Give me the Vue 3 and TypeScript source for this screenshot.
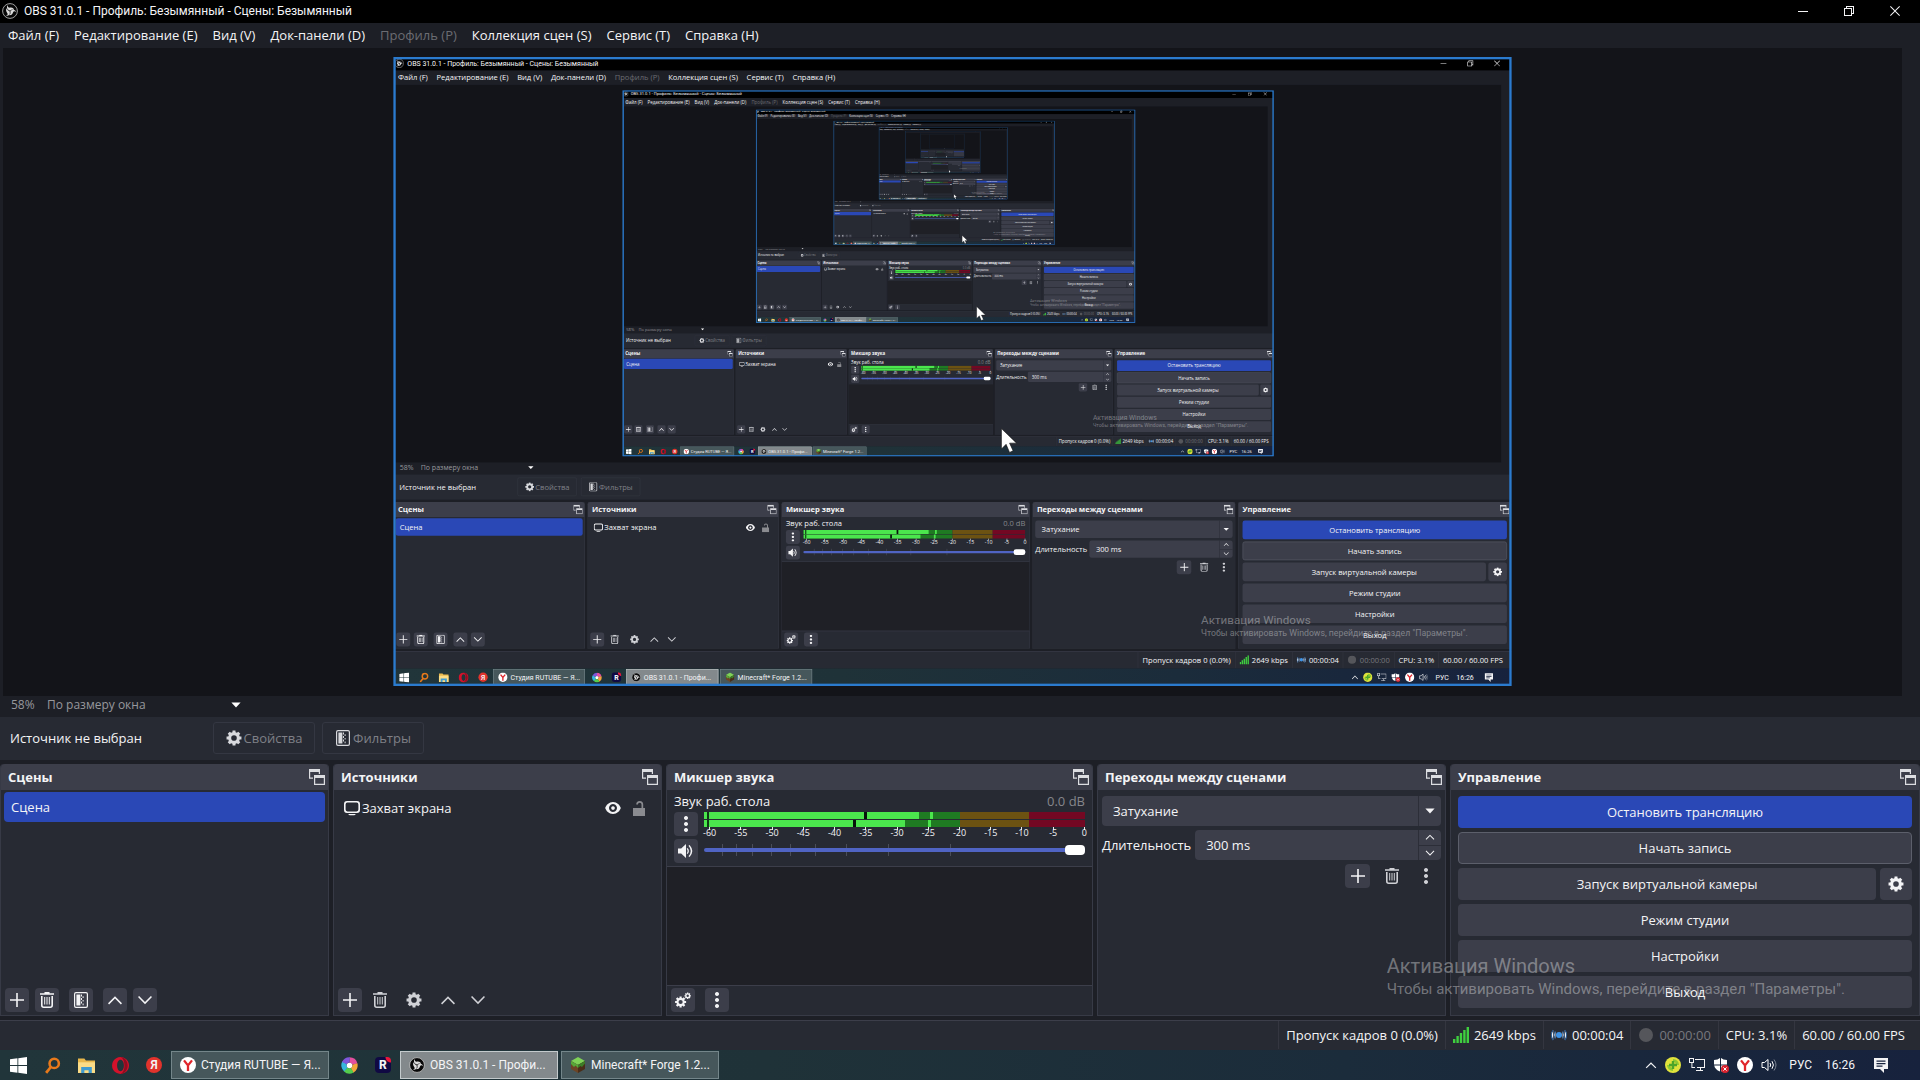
<script setup lang="ts">
import { computed, h, ref } from 'vue'

defineOptions({ name: 'StudioWindow' })

const props = withDefaults(defineProps<{ depth?: number }>(), { depth: 0 })
const maxDepth = 7
const captured = computed(() => props.depth > 0)
const fieldId = (name: string) => `${name}-${props.depth}`

function gear(cx: number, cy: number, outer: number, root: number, hole: number): string {
  const teeth = 8
  const points: string[] = []
  for (let i = 0; i < teeth; i++) {
    const a = (i / teeth) * Math.PI * 2
    const steps: [number, number][] = [[-0.27, root], [-0.19, outer], [0.19, outer], [0.27, root]]
    for (const [d, r] of steps) {
      points.push(`${(cx + r * Math.sin(a + d)).toFixed(2)} ${(cy - r * Math.cos(a + d)).toFixed(2)}`)
    }
  }
  return (
    `M${points.join('L')}Z` +
    `M${cx - hole} ${cy}a${hole} ${hole} 0 1 0 ${hole * 2} 0a${hole} ${hole} 0 1 0 ${-hole * 2} 0Z`
  )
}

const glyphs: Record<string, string> = {
  plus: 'M7.2 1h1.6v6.2H15v1.6H8.8V15H7.2V8.8H1V7.2h6.2Z',
  trash:
    'M5.5 0h5v1.2H15v1.6H1V1.2h4.5ZM2 4h1.6v9.2q0 1.2 1.2 1.2h6.4q1.2 0 1.2-1.2V4H14v9.3q0 2.7-2.7 2.7H4.7Q2 16 2 13.3ZM5.2 5h1v7.6h-1ZM7.5 5h1v7.6h-1ZM9.8 5h1v7.6h-1Z',
  filter:
    'M3 0h10q2 0 2 2v12q0 2-2 2H3q-2 0-2-2V2q0-2 2-2ZM3 1.2q-.8 0-.8.8v12q0 .8.8.8h10q.8 0 .8-.8V2q0-.8-.8-.8ZM3.4 2.5h4v11h-4ZM8 2.5h1v2H8ZM8 6h1v2H8ZM8 9.5h1v2H8ZM9.6 4.3h1v1.6h-1ZM9.6 8h1v1.6h-1ZM9.6 11.6h1v1.6h-1Z',
  up: 'M8 4.2l7 7.1-1.1 1.1L8 6.5l-5.9 5.9L1 11.3Z',
  down: 'M8 12.2L1 5.1 2.1 4 8 9.9 13.9 4 15 5.1Z',
  gear: gear(8, 8, 7.6, 5.9, 2.8),
  gears: gear(5.6, 10, 5.6, 4.2, 2.1) + gear(12.7, 3.8, 3.3, 2.5, 1.2),
  dots: 'M8 0a2 2 0 1 0 .01 0ZM8 6a2 2 0 1 0 .01 0ZM8 12a2 2 0 1 0 .01 0Z',
  arrow: 'M3.4 5.6h9.2L8 10.6Z',
  popout:
    'M0 0h11v5h-1.2V3H1.2v5.5H4v1.2H0ZM5 6h11v10H5ZM6.2 9v5.8h8.6V9Z',
  speaker:
    'M0 5.4h3.2L8 1v14l-4.8-4.4H0ZM9.6 4.9q2.6 3.1 0 6.2l-.9-.8q1.8-2.3 0-4.6ZM11.6 1.9q5.4 6.1 0 12.2l-1.1-.9q4.5-5.2 0-10.4Z',
  monitor:
    'M3 1h10q3 0 3 3v6q0 3-3 3H3q-3 0-3-3V4q0-3 3-3ZM3.4 2.6q-1.8 0-1.8 1.8v5.2q0 1.8 1.8 1.8h9.2q1.8 0 1.8-1.8V4.4q0-1.8-1.8-1.8ZM4.4 14h7.2q0 1.2-1.8 1.2H6.2Q4.4 15.2 4.4 14Z',
  eye: 'M8 2C4 2 1 5.2.2 8 1 10.8 4 14 8 14s7-3.2 7.8-6C15 5.2 12 2 8 2ZM8 4a4 4 0 1 1-.01 0ZM8 6.2a1.8 1.8 0 1 0 .01 0Z',
  unlock: 'M2 8h8.5V4.6q0-1.8-1.8-1.8T6.9 4.6H5.2Q5.2 1 8.7 1t3.5 3.6V8H14v8H2Z',
  minimize: 'M3 8h10v1H3Z',
  restore: 'M5 3h8v8h-2v2H3V5h2ZM6 4v1h5v5h1V4ZM4 6v6h6V6Z',
  close: 'M3.7 3L8 7.3 12.3 3l.7.7L8.7 8l4.3 4.3-.7.7L8 8.7 3.7 13l-.7-.7L7.3 8 3 3.7Z',
  signal: 'M0 12h2.4v4H0ZM3.4 9h2.4v7H3.4ZM6.8 6h2.4v10H6.8ZM10.2 3h2.4v13h-2.4ZM13.6 0H16v16h-2.4Z',
  network:
    'M0 1h5v5H3.4v4H6v1H2.4V6H0ZM1 2v3h3V2ZM6 2h10v9h-4v2h2v1H7v-1h4v-2H8v-1h7V3H6Z',
  note: 'M1 1h14v11h-4v4l-4-4H1ZM3.5 3.5v1.2h9V3.5ZM3.5 6v1.2h9V6ZM3.5 8.5v1.2h6V8.500Z',
}

const Glyph = (p: { name: string }) =>
  h('svg', { viewBox: '0 0 16 16', class: 'glyph', 'aria-hidden': 'true' }, [
    h('path', { d: glyphs[p.name], 'fill-rule': 'evenodd' }),
  ])
Glyph.props = ['name']

const ObsLogo = () =>
  h('svg', { viewBox: '0 0 16 16', class: 'logo', 'aria-hidden': 'true' }, [
    h('circle', { cx: 8, cy: 8, r: 7.4, fill: '#080808', stroke: '#c8c8c8', 'stroke-width': 0.8 }),
    ...[0, 120, 240].map((angle) =>
      h('path', {
        d: 'M8.4 7.4C5.600 7.600 3.900 4.600 5.800 2.100C5.600 4.400 6.700 4.900 8.300 4.600C10.500 4.300 12 5.600 12.100 7.400C11 6.100 9.600 6 8.400 7.400Z',
        fill: '#dcdcdc',
        transform: `rotate(${angle} 8 8)`,
      }),
    ),
  ])

const YandexLogo = () =>
  h('svg', { viewBox: '0 0 16 16', class: 'logo', 'aria-hidden': 'true' }, [
    h('circle', { cx: 8, cy: 8, r: 8, fill: '#fff' }),
    h('path', { d: 'M4 3.4l4 5 4-5M8 8v6', fill: 'none', stroke: '#e0262b', 'stroke-width': 2.3 }),
  ])

interface MenuEntry { label: string; disabled?: boolean }
const menus: MenuEntry[] = [
  { label: 'Файл (F)' },
  { label: 'Редактирование (E)' },
  { label: 'Вид (V)' },
  { label: 'Док-панели (D)' },
  { label: 'Профиль (P)', disabled: true },
  { label: 'Коллекция сцен (S)' },
  { label: 'Сервис (T)' },
  { label: 'Справка (H)' },
]

const scale = Array.from({ length: 13 }, (_, i) => String(i * 5 - 60))
const faderMarks = [18, 32, 48, 67, 86, 111, 142, 184, 246]
const channels = [
  { y: 0, level: 215, peak: 226, mark: 160 },
  { y: 8, level: 201, peak: 224, mark: 149 },
]
const volume = ref(100)
const duration = ref('300 ms')
</script>

<template>
  <div class="screen" :class="{ captured }">
    <header class="titlebar">
      <ObsLogo />
      <h1>OBS 31.0.1 - Профиль: Безымянный - Сцены: Безымянный</h1>
      <button class="winbtn" aria-label="Свернуть"><Glyph name="minimize" /></button>
      <button class="winbtn" aria-label="Восстановить"><Glyph name="restore" /></button>
      <button class="winbtn" aria-label="Закрыть"><Glyph name="close" /></button>
    </header>

    <nav class="menubar">
      <button v-for="m in menus" :key="m.label" :disabled="m.disabled">{{ m.label }}</button>
    </nav>

    <main class="stage">
      <svg class="preview" viewBox="0 0 1920 1080">
        <foreignObject v-if="depth < maxDepth" width="1920" height="1080">
          <StudioWindow :depth="depth + 1" inert />
        </foreignObject>
        <rect x="2" y="2" width="1916" height="1076" class="selection" />
      </svg>
    </main>

    <div class="zoombar">
      <span class="percent">58%</span>
      <div class="picker">
        <select aria-label="Масштаб"><option>По размеру окна</option></select>
        <Glyph name="arrow" />
      </div>
    </div>

    <div class="context">
      <span class="context-name">Источник не выбран</span>
      <button disabled><Glyph name="gear" />Свойства</button>
      <button disabled><Glyph name="filter" />Фильтры</button>
    </div>

    <div class="docks">
      <section class="dock">
        <header><h2>Сцены</h2><button aria-label="Открепить"><Glyph name="popout" /></button></header>
        <ul class="list">
          <li class="scene">Сцена</li>
        </ul>
        <div class="tools">
          <button aria-label="Добавить"><Glyph name="plus" /></button>
          <button aria-label="Удалить"><Glyph name="trash" /></button>
          <button class="apart" aria-label="Фильтры"><Glyph name="filter" /></button>
          <button class="apart" aria-label="Вверх"><Glyph name="up" /></button>
          <button aria-label="Вниз"><Glyph name="down" /></button>
        </div>
      </section>

      <section class="dock">
        <header><h2>Источники</h2><button aria-label="Открепить"><Glyph name="popout" /></button></header>
        <ul class="list">
          <li class="source">
            <Glyph name="monitor" />
            <span>Захват экрана</span>
            <button aria-label="Видимость"><Glyph name="eye" /></button>
            <button class="dim" aria-label="Блокировка"><Glyph name="unlock" /></button>
          </li>
        </ul>
        <div class="tools">
          <button aria-label="Добавить"><Glyph name="plus" /></button>
          <button class="flat" aria-label="Удалить"><Glyph name="trash" /></button>
          <button class="flat apart" aria-label="Свойства"><Glyph name="gear" /></button>
          <button class="flat apart" aria-label="Вверх"><Glyph name="up" /></button>
          <button class="flat" aria-label="Вниз"><Glyph name="down" /></button>
        </div>
      </section>

      <section class="dock">
        <header><h2>Микшер звука</h2><button aria-label="Открепить"><Glyph name="popout" /></button></header>
        <div class="channel">
          <div class="channel-head">
            <label :for="fieldId('volume')">Звук раб. стола</label>
            <span>0.0 dB</span>
          </div>
          <div class="channel-body">
            <div class="channel-buttons">
              <button aria-label="Меню"><Glyph name="dots" /></button>
              <button aria-label="Звук"><Glyph name="speaker" /></button>
            </div>
            <div class="meters">
              <svg class="meter" viewBox="0 0 381 15" preserveAspectRatio="none">
                <g v-for="c in channels" :key="c.y">
                  <rect x="0" :y="c.y" width="256" height="7" fill="#1f7a22" />
                  <rect x="256" :y="c.y" width="69" height="7" fill="#6c5212" />
                  <rect x="325" :y="c.y" width="56" height="7" fill="#730823" />
                  <rect x="0" :y="c.y" :width="c.level" height="7" fill="#4be64d" />
                  <rect :x="c.peak" :y="c.y" width="3" height="7" fill="#4be64d" />
                  <rect :x="c.mark" :y="c.y" width="3" height="7" fill="#07140a" />
                  <rect x="3" :y="c.y" width="2" height="7" fill="#0f3a14" />
                </g>
              </svg>
              <div class="scale">
                <span v-for="s in scale" :key="s">{{ s }}</span>
              </div>
              <div class="fader">
                <svg viewBox="0 0 381 12" preserveAspectRatio="none">
                  <rect v-for="x in faderMarks" :key="x" :x="x" y="0" width="1" height="12" fill="#4a4d59" />
                </svg>
                <input :id="fieldId('volume')" v-model="volume" type="range" min="0" max="100" />
              </div>
            </div>
          </div>
        </div>
        <div class="mixer-space"></div>
        <div class="tools mixer-tools">
          <button aria-label="Настройки звука"><Glyph name="gears" /></button>
          <button class="apart" aria-label="Меню"><Glyph name="dots" /></button>
        </div>
      </section>

      <section class="dock">
        <header><h2>Переходы между сценами</h2><button aria-label="Открепить"><Glyph name="popout" /></button></header>
        <div class="transitions">
          <div class="combo">
            <select aria-label="Переход"><option>Затухание</option></select>
            <Glyph name="arrow" />
          </div>
          <div class="duration">
            <label :for="fieldId('duration')">Длительность</label>
            <div class="spin">
              <input :id="fieldId('duration')" v-model="duration" type="text" />
              <div class="steps">
                <button aria-label="Больше"><Glyph name="up" /></button>
                <button aria-label="Меньше"><Glyph name="down" /></button>
              </div>
            </div>
          </div>
          <div class="tools transition-tools">
            <button aria-label="Добавить"><Glyph name="plus" /></button>
            <button class="flat" aria-label="Удалить"><Glyph name="trash" /></button>
            <button class="flat" aria-label="Меню"><Glyph name="dots" /></button>
          </div>
        </div>
      </section>

      <section class="dock">
        <header><h2>Управление</h2><button aria-label="Открепить"><Glyph name="popout" /></button></header>
        <div class="controls">
          <button class="primary">Остановить трансляцию</button>
          <button class="outlined">Начать запись</button>
          <div class="pair">
            <button>Запуск виртуальной камеры</button>
            <button class="square" aria-label="Настройки камеры"><Glyph name="gear" /></button>
          </div>
          <button>Режим студии</button>
          <button>Настройки</button>
          <button>Выход</button>
        </div>
      </section>
    </div>

    <footer class="status">
      <span>Пропуск кадров 0 (0.0%)</span>
      <span><Glyph name="signal" class="green" />2649 kbps</span>
      <span>
        <svg class="glyph" viewBox="0 0 16 16" fill="none" stroke="#28588f" stroke-width="1.2">
          <circle cx="8" cy="8" r="3" fill="#3f93e6" stroke="none" />
          <path d="M4.400 4.400a5.400 5.400 0 0 0 0 7.200M11.600 4.400a5.400 5.400 0 0 1 0 7.200M2.200 3a8 8 0 0 0 0 10M13.800 3a8 8 0 0 1 0 10" />
        </svg>
        00:00:04
      </span>
      <span class="idle">
        <svg class="glyph" viewBox="0 0 16 16"><circle cx="8" cy="8" r="7" fill="#55565b" /></svg>
        00:00:00
      </span>
      <span>CPU: 3.1%</span>
      <span>60.00 / 60.00 FPS</span>
    </footer>

    <div class="taskbar">
      <button class="pin" aria-label="Пуск">
        <svg viewBox="0 0 16 16" fill="#fff"><path d="M0 2.2L7 1.2V7.6H0ZM7.8 1.1L16 0V7.6H7.8ZM0 8.4H7V14.8L0 13.8ZM7.8 8.4H16V16L7.8 14.9Z" /></svg>
      </button>
      <button class="pin" aria-label="Поиск">
        <svg viewBox="0 0 16 16" fill="none" stroke="#e8791b"><circle cx="9.6" cy="6" r="4.4" stroke-width="2.4" /><path d="M6.4 9.4L2 15" stroke-width="2.6" /></svg>
      </button>
      <button class="pin" aria-label="Проводник">
        <svg viewBox="0 0 16 16"><path d="M0 1.5h6l1.4 1.7H16V15H0Z" fill="#e9b84c" /><path d="M0 5h16v10H0Z" fill="#fbdc86" /><path d="M3 15V9.5h10V15h-3v-2.5H6V15Z" fill="#3f9bd0" /></svg>
      </button>
      <button class="pin" aria-label="Opera">
        <svg viewBox="0 0 16 16"><path d="M8 0a8 8 0 1 0 .01 0ZM8 2.6c2 0 3.2 2.6 3.2 5.4S10 13.4 8 13.4 4.8 10.8 4.8 8 6 2.6 8 2.6Z" fill="#d3122b" fill-rule="evenodd" /><path d="M8 0c9 1 9 15 0 16 5-2 5-14 0-16Z" fill="#8d0d20" /></svg>
      </button>
      <button class="pin" aria-label="Яндекс"><span class="ya">Я</span></button>
      <button class="task"><YandexLogo />Студия RUTUBE — Я...</button>
      <button class="pin" aria-label="Браузер">
        <svg viewBox="0 0 16 16" fill="none" stroke-width="5">
          <path d="M8 2.8A5.2 5.2 0 0 1 13 6.8" stroke="#e24f9e" />
          <path d="M13 6.6A5.2 5.2 0 0 1 10.4 12.6" stroke="#f3a43b" />
          <path d="M10.6 12.5A5.2 5.2 0 0 1 4.4 11.6" stroke="#54cc4c" />
          <path d="M4.6 11.8A5.2 5.2 0 0 1 3.4 5.4" stroke="#36b7dd" />
          <path d="M3.2 5.8A5.2 5.2 0 0 1 8.2 2.8" stroke="#7f56dc" />
          <circle cx="8" cy="8" r="2.6" fill="#fff" />
        </svg>
      </button>
      <button class="pin" aria-label="RUTUBE"><span class="rutube">R</span></button>
      <button class="task active"><ObsLogo />OBS 31.0.1 - Профи...</button>
      <button class="task">
        <svg class="logo" viewBox="0 0 16 16"><path d="M8 0l7 4-7 4-7-4Z" fill="#7fd257" /><path d="M1 4l7 4v8l-7-4Z" fill="#6c4526" /><path d="M15 4L8 8v8l7-4Z" fill="#4a2d18" /><path d="M1 4l7 4v3L5.6 8.6 4 10 1 7Z" fill="#57a838" /><path d="M15 4L8 8v3l2.4-2L12 10l3-3.4Z" fill="#3c7d27" /></svg>
        Minecraft* Forge 1.2...
      </button>
      <div class="tray">
        <button aria-label="Скрытые значки"><Glyph name="up" /></button>
        <svg viewBox="0 0 16 16"><circle cx="8" cy="8" r="8" fill="#e0e23c" /><path d="M8 2a6 6 0 0 1 6 6h-3a3 3 0 0 0-3-3ZM8 14a6 6 0 0 1-6-6h3a3 3 0 0 0 3 3Z" fill="#8cc832" /><path d="M6.800 4h2.400v2.800H12v2.400H9.200V12H6.800V9.200H4V6.800h2.800Z" fill="#4ba52a" /></svg>
        <Glyph name="network" />
        <svg viewBox="0 0 16 16"><path d="M7 1v6.400H1V3Q5 3 7 1ZM8 1q2 2 6 2v4.400H8ZM1.200 8.400H7v6.200Q2 12.500 1.200 8.400ZM8 8.400h5.800Q13 12.500 8 14.600Z" fill="#fff" /><circle cx="12" cy="12" r="4" fill="#d9232e" /><path d="M10.400 10.400l3.200 3.200M13.600 10.400l-3.200 3.200" stroke="#fff" /></svg>
        <YandexLogo />
        <svg viewBox="0 0 16 16" fill="none" stroke="#fff"><path d="M1 5.500h2.500L7 2.500v11l-3.500-3H1Z" /><path d="M9 6q1.400 2 0 4M11 4.200q2.800 3.800 0 7.600" /><path d="M13 2.500q4 5.500 0 11" stroke="#7c8594" /></svg>
        <span class="lang">РУС</span>
        <time>16:26</time>
        <Glyph name="note" class="note" />
      </div>
    </div>

    <div class="watermark">
      <p class="watermark-title">Активация Windows</p>
      <p>Чтобы активировать Windows, перейдите в раздел "Параметры".</p>
    </div>

    <svg v-if="captured" class="cursor" viewBox="0 0 28 43">
      <path d="M1 1V36L9 28L15 42L21 39L15 26H27Z" fill="#fff" stroke="#111" stroke-width="1" />
    </svg>
  </div>
</template>

<style>
body {
  margin: 0;
  background: #1d1f26;
}
</style>

<style scoped>
.screen {
  position: relative;
  display: flex;
  flex-direction: column;
  width: 100%;
  height: 100vh;
  overflow: hidden;
  background: #1d1f26;
  color: #f4f4f6;
  font-family: "Open Sans", "Noto Sans", sans-serif;
  font-size: 13px;
  line-height: 18px;
}
.screen.captured {
  height: 100%;
}
.screen *,
.screen {
  box-sizing: border-box;
}
button,
input,
select {
  margin: 0;
  padding: 0;
  border: 0;
  background: none;
  color: inherit;
  font: inherit;
}
button {
  display: flex;
  align-items: center;
  justify-content: center;
  white-space: nowrap;
}
select {
  appearance: none;
}
h1,
h2,
p,
ul {
  margin: 0;
  padding: 0;
  font: inherit;
  list-style: none;
}
.glyph,
.logo {
  width: 16px;
  height: 16px;
  flex: none;
  display: block;
}
.glyph {
  fill: currentColor;
}
.titlebar,
.taskbar,
.watermark {
  font-family: Roboto, "Open Sans", sans-serif;
}

.titlebar {
  display: flex;
  align-items: center;
  height: 23px;
  flex: none;
  padding: 0 5px 1px 2px;
  gap: 6px;
  background: #000;
  font-size: 12px;
}
.titlebar h1 {
  flex: 1;
}
.winbtn {
  width: 40px;
  height: 22px;
}
.menubar {
  display: flex;
  gap: 15px;
  height: 25px;
  flex: none;
  padding: 0 0 2px 8px;
}
.menubar button:disabled {
  color: #6b6c72;
}

.stage {
  flex: 1;
  min-height: 0;
  margin: 0 18px 0 3px;
  padding: 9px 0 10px;
  background: #131419;
}
.preview {
  display: block;
  width: 100%;
  height: 100%;
}
.selection {
  fill: none;
  stroke: #2b7bce;
  stroke-width: 4;
}

.zoombar {
  display: flex;
  align-items: center;
  height: 21px;
  flex: none;
  padding: 0 0 3px 11px;
  color: #97989d;
  font-size: 12px;
}
.percent {
  width: 29px;
}
.picker {
  position: relative;
  width: 208px;
  display: flex;
  align-items: center;
}
.picker select {
  width: 100%;
  padding-left: 7px;
}
.picker .glyph {
  position: absolute;
  right: 4px;
  color: #fff;
  pointer-events: none;
}

.context {
  display: flex;
  align-items: center;
  gap: 7px;
  height: 43px;
  flex: none;
  padding: 0 0 2px 10px;
  background: #272a33;
}
.context-name {
  width: 196px;
}
.context button {
  width: 102px;
  height: 32px;
  gap: 2px;
  border: 1px solid #343742;
  border-radius: 3px;
  color: #7f8087;
}
.context .glyph {
  color: #d8d9dd;
}

.docks {
  display: grid;
  grid-template-columns: 329fr 329fr 427fr 349fr 470fr;
  gap: 4px;
  flex: none;
  padding: 4px 0;
}
.dock {
  display: flex;
  flex-direction: column;
  min-width: 0;
  border: 1px solid #373a46;
  border-top: 0;
  border-radius: 4px 4px 0 0;
  background: #272a33;
}
.dock header {
  display: flex;
  align-items: center;
  justify-content: space-between;
  height: 26px;
  flex: none;
  padding: 0 3px 0 7px;
  border-radius: 4px 4px 0 0;
  background: #3c3e4a;
}
.dock h2 {
  font-weight: 700;
}
.dock header .glyph {
  color: #dcdde1;
}
.list {
  flex: 1;
  padding: 2px 3px;
}
.scene {
  height: 30px;
  padding: 6px 7px;
  border-radius: 4px;
  background: #2a48b6;
}
.source {
  display: flex;
  align-items: center;
  gap: 2px;
  height: 32px;
  padding: 0 7px;
}
.source span {
  flex: 1;
}
.source button {
  width: 24px;
}
.dim {
  color: #8a8b90;
}
.tools {
  display: flex;
  gap: 6px;
  height: 27px;
  flex: none;
  padding-left: 4px;
}
.tools button {
  width: 24px;
  height: 24px;
  border-radius: 4px;
  background: #3c3e4a;
}
.tools .flat {
  background: none;
  color: #d0d1d6;
}
.tools .apart {
  margin-left: 4px;
}

.channel {
  height: 77px;
  flex: none;
  padding: 2px 7px 0;
  border-bottom: 1px solid #3c3e4a;
}
.channel-head {
  display: flex;
  justify-content: space-between;
}
.channel-head span {
  color: #85868b;
}
.channel-body {
  display: flex;
  gap: 6px;
  padding-top: 2px;
}
.channel-buttons {
  display: flex;
  flex-direction: column;
  gap: 3px;
}
.channel-buttons button {
  width: 24px;
  height: 24px;
  border-radius: 4px;
  background: #3c3e4a;
}
.meters {
  flex: 1;
  min-width: 0;
}
.meter {
  display: block;
  width: 100%;
  height: 15px;
}
.scale {
  display: flex;
  margin: 0 -15px 0 -10px;
  font-size: 9px;
  line-height: 12px;
  text-align: center;
}
.scale span {
  flex: 1 0 0;
}
.scale span::before {
  content: "";
  display: block;
  width: 1px;
  height: 3px;
  margin: 0 auto -3px;
  background: #e8e8ea;
}
.fader {
  position: relative;
  display: flex;
  align-items: center;
  height: 22px;
}
.fader svg {
  position: absolute;
  width: 100%;
  height: 12px;
}
.fader input {
  position: relative;
  width: 100%;
  height: 10px;
  appearance: none;
}
.fader input::-webkit-slider-runnable-track {
  height: 4px;
  border-radius: 2px;
  background: #5064c4;
}
.fader input::-webkit-slider-thumb {
  appearance: none;
  width: 20px;
  height: 10px;
  margin-top: -3px;
  border-radius: 4px;
  background: #fff;
}
.mixer-space {
  flex: 1;
  background: #1f2026;
}
.mixer-tools {
  height: 30px;
  padding-top: 2px;
  border-top: 1px solid #3c3e4a;
}

.transitions {
  display: flex;
  flex-direction: column;
  gap: 4px;
  padding: 6px 4px 0;
}
.combo {
  position: relative;
  height: 30px;
}
.combo select {
  width: 100%;
  height: 100%;
  padding-left: 11px;
  border-radius: 4px;
  background: #3c3e4a;
}
.combo .glyph {
  position: absolute;
  top: 0;
  right: 0;
  width: 23px;
  height: 30px;
  padding: 0 3px;
  border-left: 1px solid #2c2e38;
  pointer-events: none;
}
.duration {
  display: flex;
  align-items: center;
  gap: 4px;
}
.spin {
  display: flex;
  flex: 1;
  min-width: 0;
  height: 30px;
  border-radius: 4px;
  background: #3c3e4a;
}
.spin input {
  flex: 1;
  min-width: 0;
  padding-left: 11px;
}
.steps {
  display: flex;
  flex-direction: column;
  width: 23px;
  border-left: 1px solid #2c2e38;
}
.steps button {
  flex: 1;
}
.steps button + button {
  border-top: 1px solid #2c2e38;
}
.steps .glyph {
  width: 10px;
  height: 10px;
}
.transition-tools {
  justify-content: flex-end;
  gap: 9px;
  padding-right: 3px;
}
.transition-tools button {
  width: 25px;
}

.controls {
  display: flex;
  flex-direction: column;
  gap: 4px;
  padding: 6px 7px 7px;
}
.controls button {
  height: 32px;
  border-radius: 4px;
  background: #3c3e4a;
}
.controls .primary {
  background: #2a48b6;
}
.controls .outlined {
  border: 1px solid #5c5f6b;
}
.pair {
  display: flex;
  gap: 4px;
}
.pair button {
  flex: 1;
}
.pair .square {
  flex: none;
  width: 32px;
}

.status {
  display: flex;
  justify-content: flex-end;
  align-items: center;
  height: 30px;
  flex: none;
  padding: 0 8px 1px 0;
  border-top: 1px solid #3c3e4a;
  background: #272a33;
}
.status span {
  display: flex;
  align-items: center;
  gap: 5px;
  height: 28px;
  padding: 0 7px;
  border-left: 1px solid #343640;
}
.status .idle {
  color: #77787e;
}
.green {
  color: #3fcf3f;
}

.taskbar {
  display: flex;
  align-items: center;
  height: 30px;
  flex: none;
  padding-left: 1px;
  background: linear-gradient(90deg, #21353a 0%, #1f3238 40%, #1b2c3b 70%, #17223d 100%);
  font-size: 12px;
}
.pin {
  width: 34px;
  height: 30px;
}
.pin svg {
  width: 17px;
  height: 17px;
}
.ya,
.rutube {
  width: 16px;
  height: 16px;
  border-radius: 50%;
  background: #e0332c;
  font-size: 12px;
  font-weight: 600;
  line-height: 16px;
}
.rutube {
  border-radius: 4px;
  background: radial-gradient(circle at 100% 0, #ed143b 5px, #100943 6px);
  font-weight: 800;
}
.task {
  justify-content: flex-start;
  width: 158px;
  height: 28px;
  margin-right: 3px;
  padding-left: 8px;
  gap: 5px;
  border: 1px solid #74868a;
  background: #46575b;
}
.task.active {
  border-color: #c3cacc;
  background: #83898c;
}
.tray {
  display: flex;
  align-items: center;
  gap: 8px;
  margin-left: auto;
  padding-right: 31px;
}
.tray svg {
  width: 16px;
  height: 16px;
}
.tray button .glyph {
  width: 12px;
}
.lang {
  margin: 0 5px 0 4px;
}
.note {
  margin-left: 10px;
}

.watermark {
  position: absolute;
  right: 75px;
  bottom: 81px;
  color: rgba(255, 255, 255, 0.36);
  font-size: 15px;
  line-height: 20px;
  pointer-events: none;
}
.watermark-title {
  font-size: 20px;
  line-height: 26px;
}
.cursor {
  position: absolute;
  left: 54.3%;
  top: 59%;
  width: 28px;
  height: 43px;
}
</style>
